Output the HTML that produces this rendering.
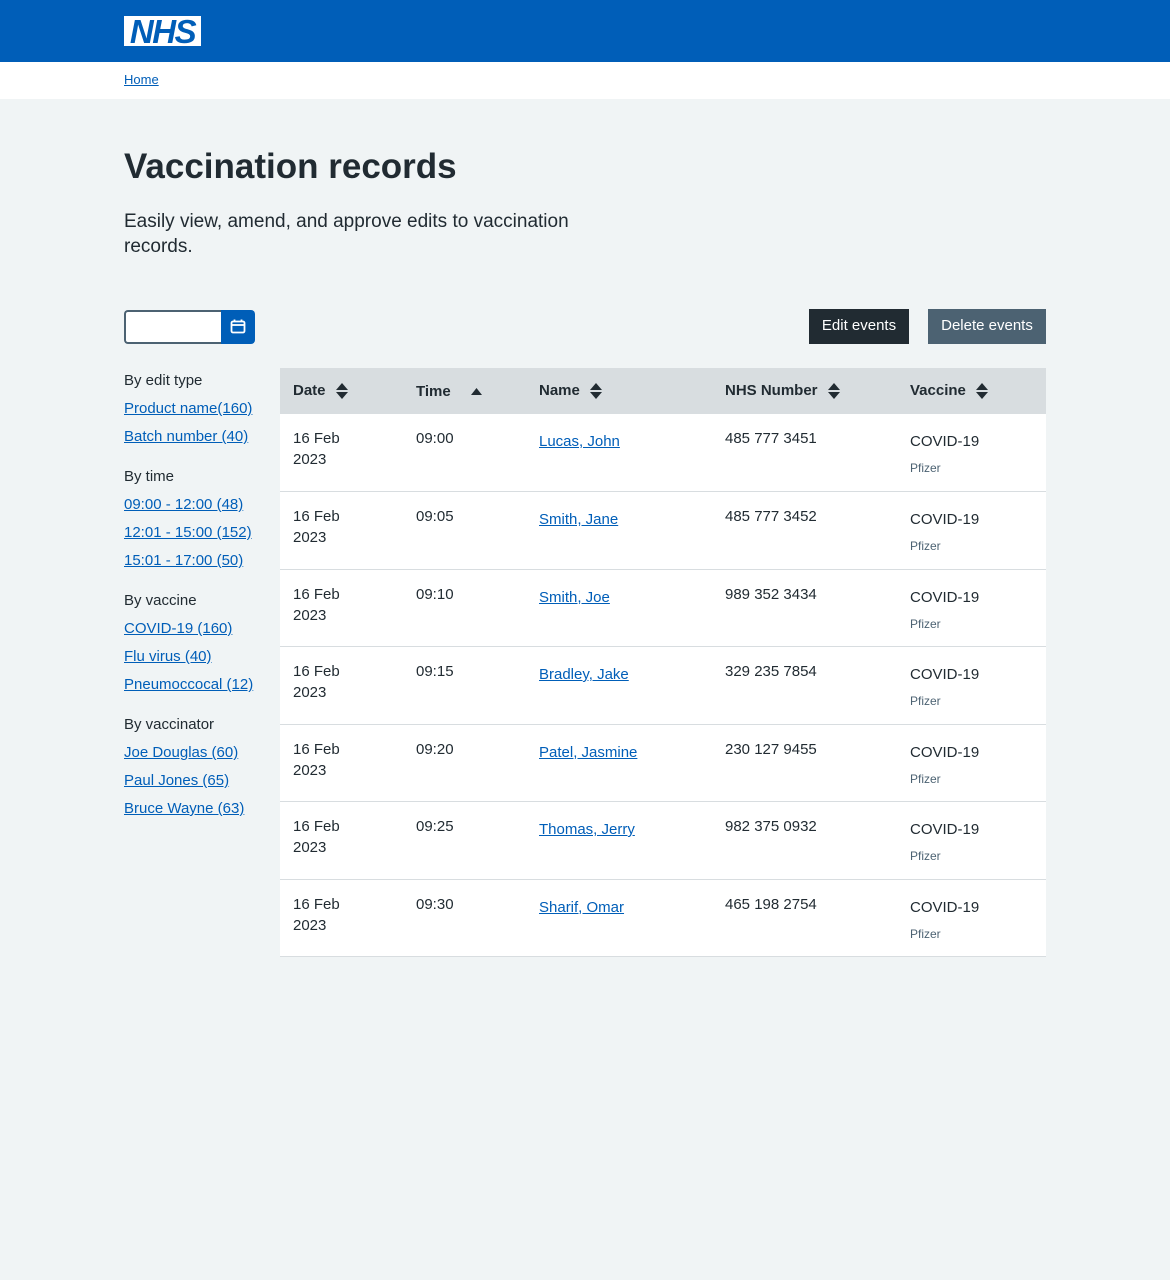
<!DOCTYPE html>
<html><head><meta charset="utf-8"><style>
*{box-sizing:border-box;margin:0;padding:0}
body{width:1170px;height:1280px;background:#f0f4f5;font-family:"Liberation Sans",sans-serif;color:#212b32;position:relative;overflow:hidden}
a{color:#005eb8;text-decoration:underline}
.hdr{height:62px;background:#005eb8;position:relative}
.logo{position:absolute;left:124px;top:16px;width:77px;height:30px;background:#fff;color:#005eb8;font-weight:bold;font-style:italic;font-size:33px;line-height:31px;text-align:center;letter-spacing:-1.5px;overflow:hidden}
.bc{height:37px;background:#fff;font-size:13px;padding:10px 0 0 124px}
h1{position:absolute;left:124px;top:147px;font-size:35px;font-weight:bold}
.lead{position:absolute;left:124px;top:209px;width:490px;font-size:19px;line-height:25px}
.inp{position:absolute;left:124px;top:310px;width:98px;height:34px;background:#fff;border:2px solid #4c6272;border-right:none;border-radius:4px 0 0 4px}
.cal{position:absolute;left:221px;top:310px;width:34px;height:34px;background:#005eb8;border-radius:0 4px 4px 0}
.btn{position:absolute;top:309px;height:35px;color:#fff;font-size:15px;line-height:34px;text-align:center}
.side{position:absolute;left:124px;top:372px;font-size:15px}
.side div{height:28px;line-height:18px}
.side .g{margin-top:12px}
.side .g:first-child{margin-top:0}
table{position:absolute;left:280px;top:368px;width:766px;border-collapse:collapse;font-size:15px}
th{background:#d8dde0;height:46px;text-align:left;font-weight:bold;padding-left:13px}
td{background:#fff;height:77.5px;vertical-align:top;padding:14px 0 0 13px;border-bottom:1px solid #d8dde0;line-height:21px}
td.n{padding-top:17px}
td small{font-size:12px;color:#4c6272;display:block;margin-top:6px}
.s{display:inline-block;vertical-align:middle;margin-left:6px}
</style></head><body>
<div class="hdr"><div class="logo">NHS</div></div>
<div class="bc"><a>Home</a></div>
<h1>Vaccination records</h1>
<p class="lead">Easily view, amend, and approve edits to vaccination records.</p>
<div class="inp"></div>
<div class="cal"><svg width="34" height="34" viewBox="0 0 34 34"><rect x="10.5" y="11.5" width="13" height="11" rx="1.5" fill="none" stroke="#fff" stroke-width="1.8"/><line x1="10.5" y1="15" x2="23.5" y2="15" stroke="#fff" stroke-width="1.8"/><line x1="13.5" y1="9.5" x2="13.5" y2="12" stroke="#fff" stroke-width="1.8"/><line x1="20.5" y1="9.5" x2="20.5" y2="12" stroke="#fff" stroke-width="1.8"/></svg></div>
<div class="btn" style="left:809px;width:100px;background:#212b32">Edit events</div>
<div class="btn" style="left:928px;width:118px;background:#4c6272">Delete events</div>
<div class="side">
<div class="g">By edit type</div><div><a>Product name(160)</a></div><div><a>Batch number (40)</a></div>
<div class="g">By time</div><div><a>09:00 - 12:00 (48)</a></div><div><a>12:01 - 15:00 (152)</a></div><div><a>15:01 - 17:00 (50)</a></div>
<div class="g">By vaccine</div><div><a>COVID-19 (160)</a></div><div><a>Flu virus (40)</a></div><div><a>Pneumoccocal (12)</a></div>
<div class="g">By vaccinator</div><div><a>Joe Douglas (60)</a></div><div><a>Paul Jones (65)</a></div><div><a>Bruce Wayne (63)</a></div>
</div>
<table>
<tr>
<th style="width:123px">Date <svg class="s" width="12" height="18" viewBox="0 0 12 18"><path d="M0 8L6 1L12 8Z M0 10L6 17L12 10Z" fill="#212b32"/></svg></th>
<th style="width:123px">Time <svg class="s" width="22" height="10" viewBox="0 0 22 10"><path d="M10 8L15.5 1L21 8Z" fill="#212b32"/></svg></th>
<th style="width:186px">Name <svg class="s" width="12" height="18" viewBox="0 0 12 18"><path d="M0 8L6 1L12 8Z M0 10L6 17L12 10Z" fill="#212b32"/></svg></th>
<th style="width:185px">NHS Number <svg class="s" width="12" height="18" viewBox="0 0 12 18"><path d="M0 8L6 1L12 8Z M0 10L6 17L12 10Z" fill="#212b32"/></svg></th>
<th>Vaccine <svg class="s" width="12" height="18" viewBox="0 0 12 18"><path d="M0 8L6 1L12 8Z M0 10L6 17L12 10Z" fill="#212b32"/></svg></th>
</tr>
<tr><td>16 Feb<br>2023</td><td>09:00</td><td class="n"><a>Lucas, John</a></td><td>485 777 3451</td><td class="n">COVID-19<small>Pfizer</small></td></tr>
<tr><td>16 Feb<br>2023</td><td>09:05</td><td class="n"><a>Smith, Jane</a></td><td>485 777 3452</td><td class="n">COVID-19<small>Pfizer</small></td></tr>
<tr><td>16 Feb<br>2023</td><td>09:10</td><td class="n"><a>Smith, Joe</a></td><td>989 352 3434</td><td class="n">COVID-19<small>Pfizer</small></td></tr>
<tr><td>16 Feb<br>2023</td><td>09:15</td><td class="n"><a>Bradley, Jake</a></td><td>329 235 7854</td><td class="n">COVID-19<small>Pfizer</small></td></tr>
<tr><td>16 Feb<br>2023</td><td>09:20</td><td class="n"><a>Patel, Jasmine</a></td><td>230 127 9455</td><td class="n">COVID-19<small>Pfizer</small></td></tr>
<tr><td>16 Feb<br>2023</td><td>09:25</td><td class="n"><a>Thomas, Jerry</a></td><td>982 375 0932</td><td class="n">COVID-19<small>Pfizer</small></td></tr>
<tr><td>16 Feb<br>2023</td><td>09:30</td><td class="n"><a>Sharif, Omar</a></td><td>465 198 2754</td><td class="n">COVID-19<small>Pfizer</small></td></tr>
</table>
</body></html>
